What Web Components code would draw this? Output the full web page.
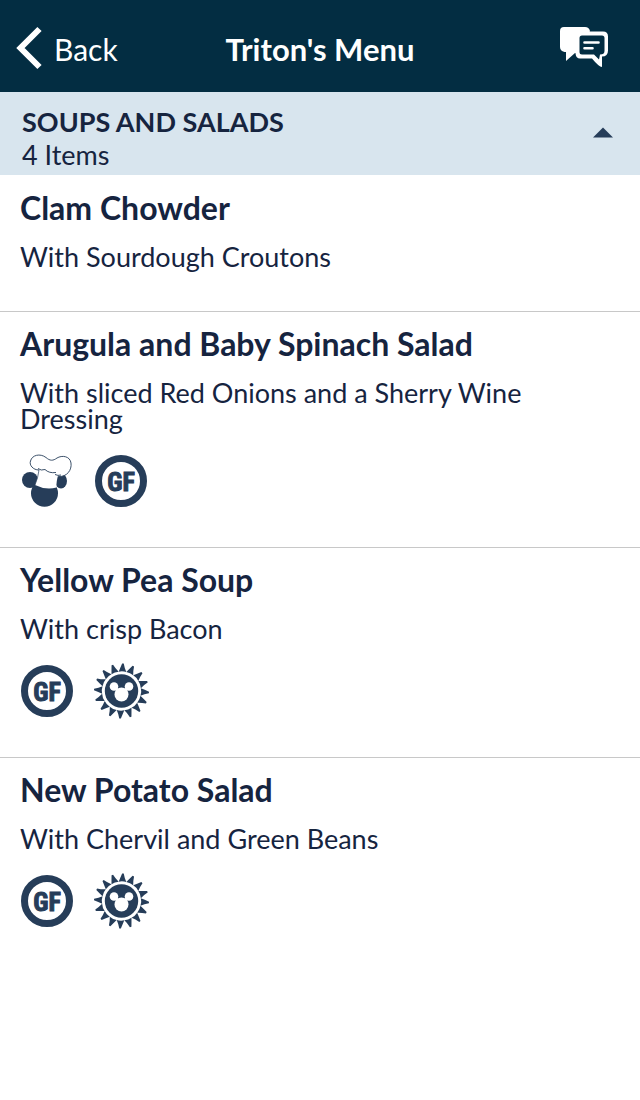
<!DOCTYPE html>
<html lang="en">
<head>
<meta charset="utf-8">
<meta name="viewport" content="width=device-width, initial-scale=1">
<title>Triton's Menu</title>
<style>
  body { margin: 0; background: #fff; color: #16243f; font-family: Lato, "Liberation Sans", sans-serif; }
</style>
</head>
<body>
<menu-page>
  <app-bar>Triton's Menu</app-bar>
  <menu-section heading="SOUPS AND SALADS" count="4 Items">
    <menu-item name="Clam Chowder">With Sourdough Croutons</menu-item>
    <menu-item name="Arugula and Baby Spinach Salad">With sliced Red Onions and a Sherry Wine Dressing
      <diet-icon slot="icons" kind="chef"></diet-icon>
      <diet-icon slot="icons" kind="gf"></diet-icon>
    </menu-item>
    <menu-item name="Yellow Pea Soup">With crisp Bacon
      <diet-icon slot="icons" kind="gf"></diet-icon>
      <diet-icon slot="icons" kind="sun"></diet-icon>
    </menu-item>
    <menu-item name="New Potato Salad">With Chervil and Green Beans
      <diet-icon slot="icons" kind="gf"></diet-icon>
      <diet-icon slot="icons" kind="sun"></diet-icon>
    </menu-item>
  </menu-section>
</menu-page>
<script>
class Base extends HTMLElement {
  constructor() {
    super();
    this.attachShadow({ mode: "open" });
  }
  connectedCallback() {
    this.shadowRoot.innerHTML = this.render();
    this.ready();
  }
  ready() {}
}

customElements.define("menu-page", class extends Base {
  render() {
    return `<style>:host { display: block; min-height: 100vh; }</style><slot></slot>`;
  }
});

customElements.define("app-bar", class extends Base {
  render() {
    return `
    <style>
      :host { display: block; background: #032d42; color: #fff; }
      header { display: grid; grid-template-columns: 1fr auto 1fr; align-items: center; padding: 27px 16px 21px; }
      a { display: flex; align-items: center; gap: 12px; color: inherit; text-decoration: none; font-size: 30px; line-height: 44px; }
      h1 { margin: 0; font-size: 31px; line-height: 44px; font-weight: 700; }
      button { justify-self: end; border: 0; margin: 0 16px 0 0; padding: 0; background: none; color: inherit; display: block; }
      svg { display: block; }
    </style>
    <header>
      <a href="#"><svg width="26" height="44" viewBox="0 0 26 44" overflow="visible" aria-hidden="true"><path d="M23.500 2 4.500 21l19 19" fill="none" stroke="#fff" stroke-width="6"/></svg>Back</a>
      <h1><slot></slot></h1>
      <button type="button" aria-label="Messages">
        <svg width="48" height="44" viewBox="0 0 48 44" aria-hidden="true">
          <path d="M4 0h21q4 0 5 4l-10 22-5 0-9 8v-9H4.500Q0 24 0 20V4q0-4 4-4z" fill="#fff"/>
          <path d="M20 4.500h23q5 0 5 5v14q0 6-6 6v10.500q-3 0-10-8.500H20q-4 0-4.500-5V9.500q0-5 4.500-5z" fill="#fff"/>
          <path d="M22 8.500h20q2.500 0 2.500 2.500v13q0 3.500-4.500 3.500l-1 5-5-5H22q-2.500 0-2.500-2.500V11q0-2.500 2.500-2.500z" fill="#032d42"/>
          <path d="M24.500 15.500h14M24.500 21.200h8" stroke="#fff" stroke-width="2.600" stroke-linecap="round"/>
        </svg>
      </button>
    </header>`;
  }
});

customElements.define("menu-section", class extends Base {
  render() {
    return `
    <style>
      :host { display: block; }
      h2 { margin: 0; font: inherit; }
      button { display: flex; width: 100%; box-sizing: border-box; align-items: center; justify-content: space-between; border: 0; margin: 0; padding: 13px 26px 4px 22px; background: #d8e5ee; color: inherit; font: inherit; text-align: left; }
      .label { display: flex; flex-direction: column; font-size: 27px; line-height: 33px; }
      strong { font-weight: 700; }
      svg { display: block; }
      [hidden] { display: none; }
    </style>
    <section>
      <h2><button type="button" aria-expanded="true" aria-controls="items">
        <span class="label"><strong>${this.getAttribute("heading")}</strong><span>${this.getAttribute("count")}</span></span>
        <svg width="22" height="26" viewBox="0 0 22 26" aria-hidden="true"><path d="M1 12.500 11 2.500l10 10z" fill="#263d59"/></svg>
      </button></h2>
      <div id="items"><slot></slot></div>
    </section>`;
  }
  ready() {
    const button = this.shadowRoot.querySelector("button");
    const items = this.shadowRoot.getElementById("items");
    button.addEventListener("click", () => {
      items.hidden = !items.hidden;
      button.setAttribute("aria-expanded", String(!items.hidden));
    });
  }
});

customElements.define("menu-item", class extends Base {
  render() {
    return `
    <style>
      :host { display: block; box-sizing: border-box; min-height: 136px; border-top: 1px solid #c8c8c8; padding: 12px 84px 40px 20px; }
      :host(:first-child) { border-top-color: transparent; }
      h3 { margin: 0 0 16px; font-size: 32px; line-height: 40px; font-weight: 700; }
      p { margin: 0; font-size: 27px; line-height: 26px; }
      .icons { display: flex; gap: 20px; }
      .icons ::slotted(*) { margin-top: 22px; }
    </style>
    <article>
      <h3>${this.getAttribute("name")}</h3>
      <p><slot></slot></p>
      <div class="icons"><slot name="icons"></slot></div>
    </article>`;
  }
});

const INK = "#263d59";
const rays = Array.from({ length: 16 }, (_, i) =>
  `<path d="M-3.800 -19.200Q0 -20.300 3.800 -19.200Q1.800 -23 .8 -27.500H-.8Q-2.500 -23-3.800 -19.200z" transform="translate(27.500 27) rotate(${i * 22.5 + 3})"/>`).join("");
const ICONS = {
  chef: ["Kid friendly", `
    <circle cx="24.500" cy="39.300" r="13.500" fill="${INK}"/>
    <circle cx="10" cy="26" r="8" fill="${INK}"/>
    <ellipse cx="41" cy="27" rx="6" ry="7.500" fill="${INK}"/>
    <path d="M19 15Q18 24 15 31Q26 36.500 36.500 33.500Q36 28 38.500 20z" fill="#fff"/>
    <path d="M19 16C13 16 9 11 10.500 7C12 1 20 -1 26 3.500C30 7 33 7 37 4C42 1 50 2 51 9C52 16 47 23 38.500 22.500L37 18C33 20 28 19 26 16.500C24 18 21 17.500 19 16z" fill="#fff"/>
    <path d="M19 16C13 16 9 11 10.500 7C12 1 20 -1 26 3.500C30 7 33 7 37 4C42 1 50 2 51 9C52 16 47 23 38.500 22.500M18 14.500Q21 17 25 15.500Q29 19.500 36 18.500M35 20.500Q38 22 41 21" fill="none" stroke="${INK}" stroke-width=".9"/>
    <path d="M19 16Q18 24 15 31" fill="none" stroke="${INK}" stroke-width=".7"/>`],
  gf: ["Gluten free", `
    <circle cx="27" cy="27" r="22.500" fill="#fff" stroke="${INK}" stroke-width="7"/>
    <text x="27" y="36.500" text-anchor="middle" font-family="'Liberation Sans Narrow','Roboto Condensed','DejaVu Sans Condensed',sans-serif" font-weight="700" font-size="26" fill="${INK}" stroke="${INK}" stroke-width="1">GF</text>`],
  sun: ["Seasonal", `
    <g fill="${INK}">${rays}<circle cx="27.500" cy="27" r="16.700"/></g>
    <g fill="#fff"><circle cx="27.500" cy="30.500" r="7"/><circle cx="20" cy="22.500" r="4.300"/><circle cx="35" cy="22.500" r="4.300"/></g>
    <path d="M20 22.500l7.500 8 7.500-8" fill="none" stroke="#fff" stroke-width="3"/>`]
};

customElements.define("diet-icon", class extends Base {
  render() {
    const [label, art] = ICONS[this.getAttribute("kind")];
    return `
    <style>
      :host { display: block; width: 54px; height: 53px; }
      svg { display: block; overflow: visible; }
    </style>
    <svg width="54" height="53" viewBox="0 0 54 53" role="img" aria-label="${label}">${art}</svg>`;
  }
});
</script>
</body>
</html>
